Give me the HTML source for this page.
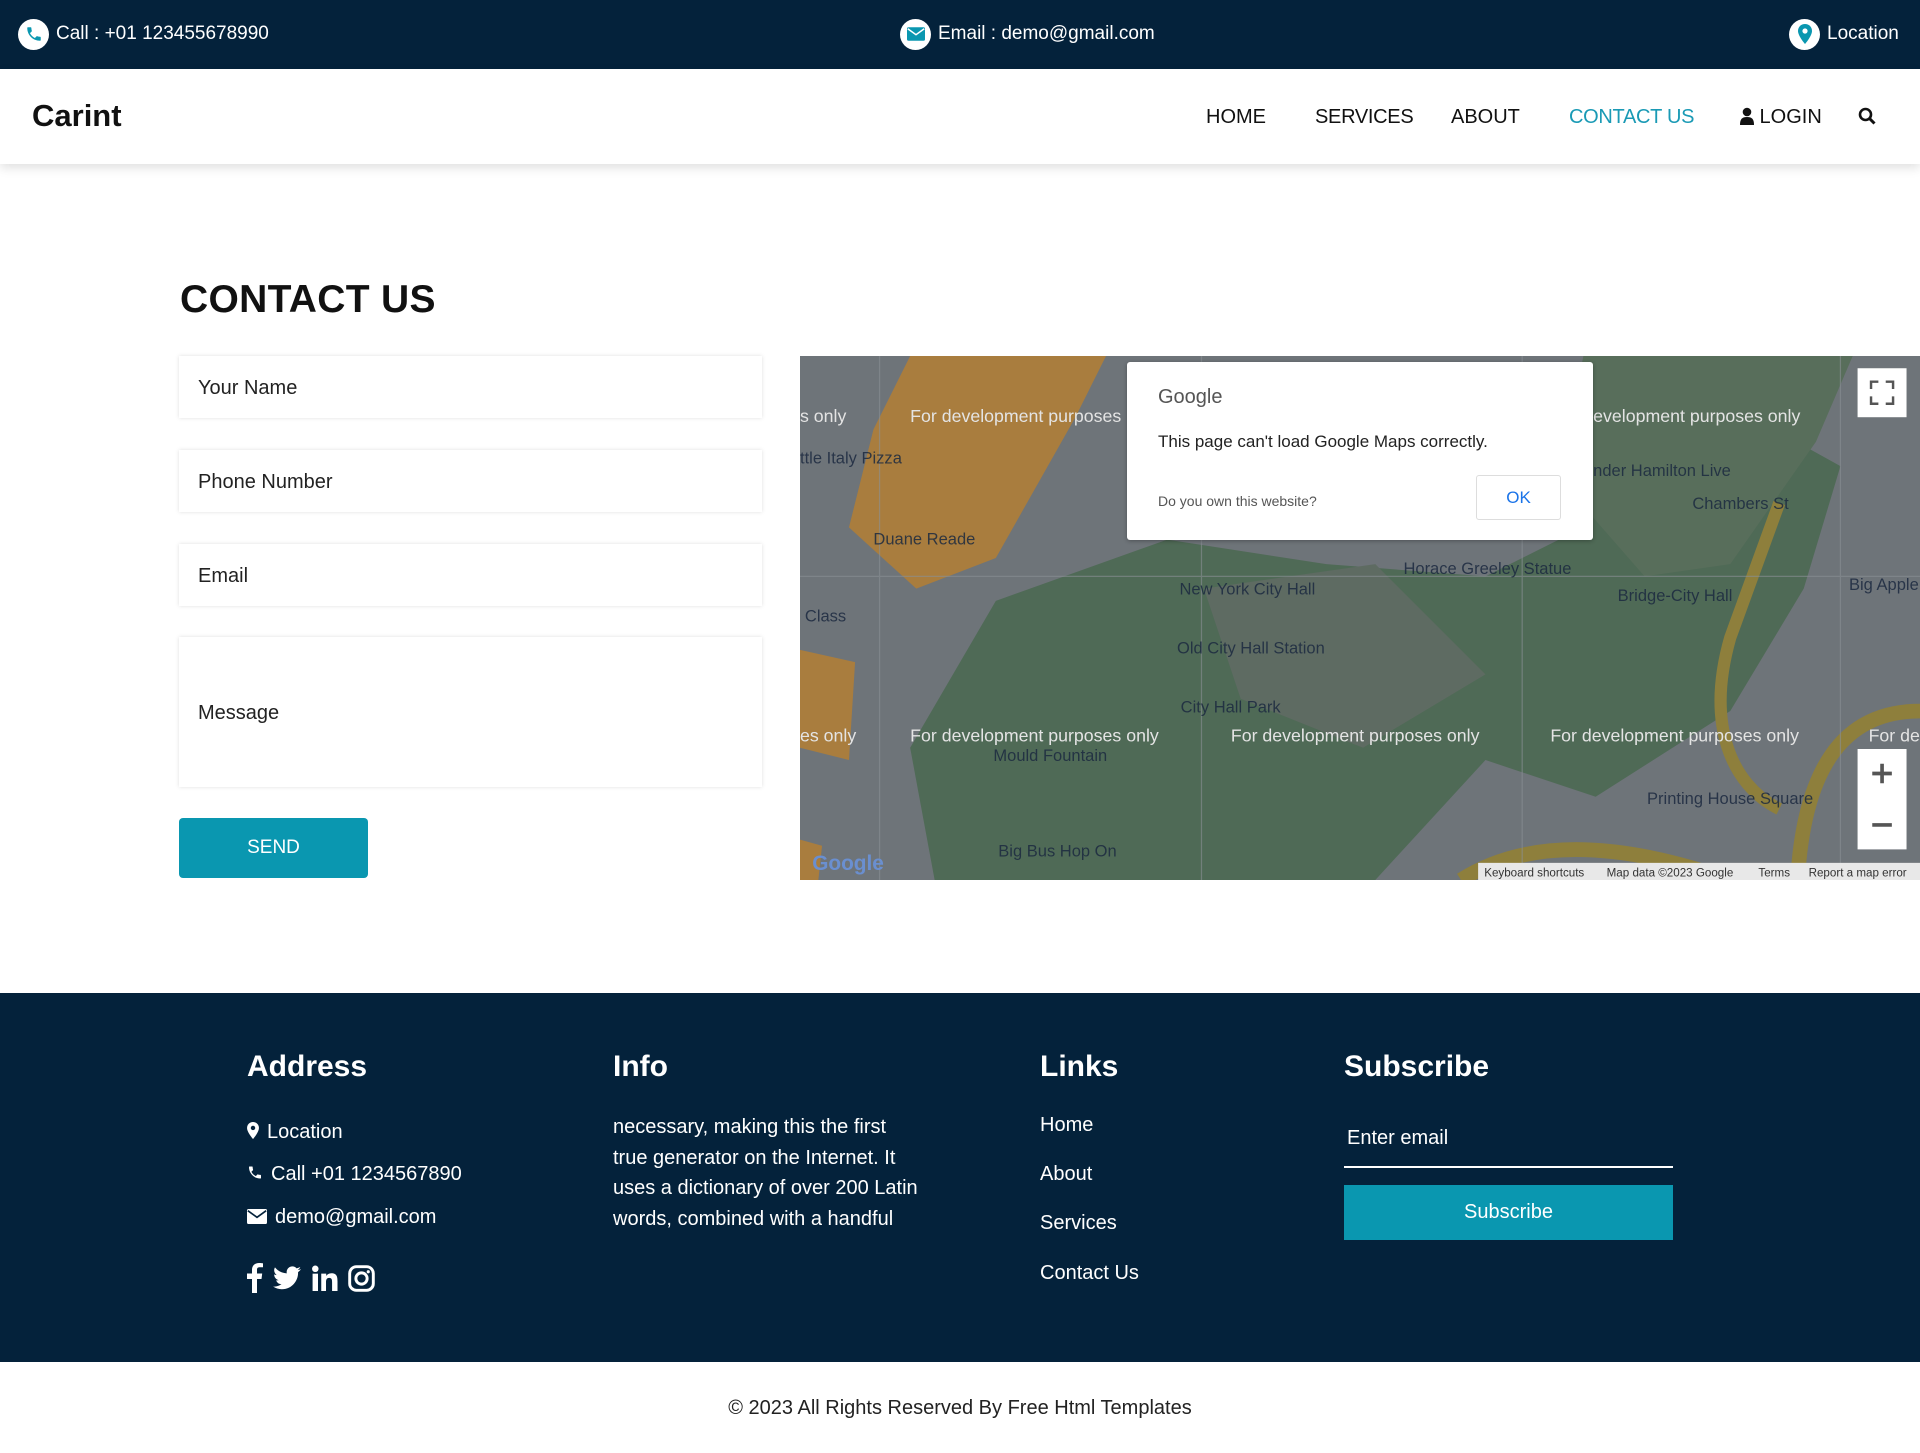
<!DOCTYPE html>
<html><head><meta charset="utf-8">
<style>
*{margin:0;padding:0;box-sizing:border-box}
body{width:1920px;height:1453px;font-family:"Liberation Sans",sans-serif;background:#fff;position:relative;overflow:hidden;color:#111}
.abs{position:absolute}
.top{left:0;top:0;width:1920px;height:69px;background:#04223b;color:#fff;font-size:19px}
.top .it{position:absolute;top:18px;display:flex;align-items:center;gap:7px;height:32px}
.ic{width:31px;height:31px;border-radius:50%;background:#fff;display:flex;align-items:center;justify-content:center}
.nav{left:0;top:69px;width:1920px;height:95px;background:#fff;box-shadow:0 4px 10px rgba(0,0,0,.12)}
.logo{left:32px;top:98px;font-size:31px;font-weight:bold;color:#111}
.nv{top:106px;font-size:20px;color:#111}
h1{position:absolute;left:180px;top:278px;font-size:39px;font-weight:bold;color:#111;letter-spacing:.3px}
.inp{position:absolute;left:179px;width:583px;background:#fff;box-shadow:0 0 4px rgba(0,0,0,.13);font-size:20px;color:#222;padding-left:19px;padding-top:2px;display:flex;align-items:center}
.btn{left:179px;top:818px;width:189px;height:60px;background:#0a97b0;border-radius:4px;color:#fff;font-size:19px;display:flex;align-items:center;justify-content:center}
.foot{left:0;top:993px;width:1920px;height:369px;background:#04223b;color:#fff}
.fh{position:absolute;top:1050px;font-size:30px;font-weight:bold;color:#fff}
.ft{position:absolute;font-size:20px;color:#fff}
.copy{left:0;top:1397px;width:1920px;text-align:center;font-size:20px;color:#222}
</style></head><body>
<div class="abs top">
 <div class="it" style="left:18px"><div class="ic"><svg width="18" height="18" viewBox="0 0 24 24"><path d="M6.6 10.8c1.4 2.8 3.8 5.1 6.6 6.6l2.2-2.2c.3-.3.7-.4 1-.2 1.1.4 2.300.6 3.6.6.6 0 1 .4 1 1V20c0 .6-.4 1-1 1C10.6 21 3 13.4 3 4c0-.6.4-1 1-1h3.5c.6 0 1 .4 1 1 0 1.3.2 2.5.6 3.6.1.3 0 .7-.2 1z" fill="#0a97b0"/></svg></div>Call : +01 123455678990</div>
 <div class="it" style="left:900px"><div class="ic"><svg width="18" height="14" viewBox="0 0 24 18"><rect x="0" y="0" width="24" height="18" rx="2" fill="#0a97b0"/><path d="M1 2l11 8 11-8" stroke="#fff" stroke-width="2" fill="none"/></svg></div>Email : demo@gmail.com</div>
 <div class="it" style="left:1789px"><div class="ic"><svg width="14" height="20" viewBox="0 0 14 20"><path d="M7 0C3 0 0 3 0 7c0 5 7 13 7 13s7-8 7-13c0-4-3-7-7-7z" fill="#0a97b0"/><circle cx="7" cy="7" r="2.6" fill="#fff"/></svg></div>Location</div>
</div>
<div class="abs nav"></div>
<div class="abs logo">Carint</div>
<div class="abs nv" style="left:1206px">HOME</div>
<div class="abs nv" style="left:1315px;letter-spacing:-.3px">SERVICES</div>
<div class="abs nv" style="left:1451px">ABOUT</div>
<div class="abs nv" style="left:1569px;color:#1a9ab5;letter-spacing:-.3px">CONTACT US</div>
<div class="abs nv" style="left:1740px"><svg width="14" height="18" viewBox="0 0 14 18" style="vertical-align:-2px"><circle cx="7" cy="5" r="4.3" fill="#111"/><path d="M0 18c0-6 2-8 7-8s7 2 7 8z" fill="#111"/></svg> LOGIN</div>
<div class="abs" style="left:1858px;top:107px"><svg width="18" height="18" viewBox="0 0 18 18"><circle cx="7.5" cy="7.5" r="5.5" stroke="#111" stroke-width="2.6" fill="none"/><path d="M11.5 11.5L16.5 16.5" stroke="#111" stroke-width="3"/></svg></div>

<h1>CONTACT US</h1>
<div class="inp" style="top:356px;height:62px">Your Name</div>
<div class="inp" style="top:450px;height:62px">Phone Number</div>
<div class="inp" style="top:544px;height:62px">Email</div>
<div class="inp" style="top:637px;height:150px">Message</div>
<div class="abs btn">SEND</div>

<div class="abs" style="left:800px;top:356px;width:1120px;height:524px;overflow:hidden">
<svg width="1120" height="524" viewBox="0 0 915 428" preserveAspectRatio="none" font-family="Liberation Sans, sans-serif">
<rect width="915" height="428" fill="#6e7479"/>
<polygon points="90,0 250,0 225,50 160,165 95,190 40,140 60,60" fill="#a97d3e"/>
<polygon points="0,240 45,250 40,330 0,320" fill="#a97d3e"/>
<polygon points="0,395 18,400 15,428 0,428" fill="#a97d3e"/>
<polygon points="160,200 300,150 430,170 560,180 640,140 700,60 760,40 850,90 820,190 760,290 650,360 560,330 470,428 110,428 90,320" fill="#4f6a56"/>
<polygon points="640,0 860,0 830,70 760,170 690,180 620,100" fill="#586e5b"/>
<polygon points="330,190 470,170 560,260 460,320 360,280" fill="#5e6b62"/>
<path d="M915,290 C850,290 820,340 815,428" stroke="#8e7f3c" stroke-width="12" fill="none"/>
<path d="M540,428 C600,390 680,400 760,428" stroke="#8e7f3c" stroke-width="12" fill="none"/>
<path d="M800,120 L760,230 C740,300 760,350 800,370" stroke="#8e7f3c" stroke-width="10" fill="none"/>
<path d="M0,180 L915,180 M65,0 L65,428 M328,0 L328,428 M590,0 L590,428 M850,0 L850,428" stroke="#8a9095" stroke-width="1" opacity=".6"/>
<g fill="#e4e4e4" font-size="14.5">
<text x="90" y="54">For development purposes only</text>
<text x="0" y="54">s only</text>
<text x="648" y="54">evelopment purposes only</text>
<text x="0" y="315">es only</text>
<text x="90" y="315">For development purposes only</text>
<text x="352" y="315">For development purposes only</text>
<text x="613" y="315">For development purposes only</text>
<text x="873" y="315">For de</text>
</g>
<g fill="#1c2a40" font-size="13.5" opacity=".85">
<text x="0" y="88">ttle Italy Pizza</text><text x="60" y="154">Duane Reade</text>
<text x="310" y="195">New York City Hall</text><text x="308" y="243">Old City Hall Station</text>
<text x="493" y="178">Horace Greeley Statue</text><text x="311" y="291">City Hall Park</text>
<text x="158" y="331">Mould Fountain</text><text x="162" y="409">Big Bus Hop On</text>
<text x="692" y="366">Printing House Square</text><text x="668" y="200">Bridge-City Hall</text>
<text x="729" y="125">Chambers St</text><text x="648" y="98">nder Hamilton Live</text>
<text x="857" y="191">Big Apple</text><text x="4" y="217">Class</text>
</g>
<text x="10" y="420" font-size="17" font-weight="bold" fill="#6a8fd0">Google</text>
<rect x="864" y="10" width="40" height="40" fill="#fff"/>
<path d="M875,27v-6h6M893,27v-6h-6M875,33v6h6M893,33v6h-6" stroke="#555" stroke-width="2" fill="none"/>
<rect x="864" y="321" width="40" height="82" fill="#fff"/>
<path d="M876,341h16M884,333v16M876,383h16" stroke="#555" stroke-width="3"/>
<rect x="554" y="414" width="361" height="14" fill="#e8e8e8"/>
<g font-size="9.5" fill="#333"><text x="559" y="425">Keyboard shortcuts</text><text x="659" y="425">Map data ©2023 Google</text><text x="783" y="425">Terms</text><text x="824" y="425">Report a map error</text></g>
</svg>
<div class="abs" style="left:327px;top:6px;width:466px;height:178px;background:#fff;border-radius:3px;box-shadow:0 1px 4px rgba(0,0,0,.3)">
 <div class="abs" style="left:31px;top:24px;font-size:20px;color:#555">Google</div>
 <div class="abs" style="left:31px;top:70px;font-size:17px;color:#222">This page can't load Google Maps correctly.</div>
 <div class="abs" style="left:31px;top:131px;font-size:14px;color:#555">Do you own this website?</div>
 <div class="abs" style="left:349px;top:113px;width:85px;height:45px;border:1px solid #ddd;border-radius:3px;color:#1a73e8;font-size:17px;display:flex;align-items:center;justify-content:center">OK</div>
</div>
</div>

<div class="abs foot"></div>
<div class="fh" style="left:247px">Address</div>
<div class="fh" style="left:613px">Info</div>
<div class="fh" style="left:1040px">Links</div>
<div class="fh" style="left:1344px">Subscribe</div>
<div class="ft" style="left:247px;top:1121px"><svg width="12" height="17" viewBox="0 0 14 20" style="vertical-align:-1px;margin-right:8px"><path d="M7 0C3 0 0 3 0 7c0 5 7 13 7 13s7-8 7-13c0-4-3-7-7-7z" fill="#fff"/><circle cx="7" cy="7" r="2.6" fill="#04223b"/></svg>Location</div>
<div class="ft" style="left:247px;top:1163px"><svg width="16" height="17" viewBox="0 0 24 24" style="vertical-align:-1px;margin-right:8px"><path d="M6.6 10.8c1.4 2.8 3.8 5.1 6.6 6.6l2.2-2.2c.3-.3.7-.4 1-.2 1.1.4 2.3.6 3.6.6.6 0 1 .4 1 1V20c0 .6-.4 1-1 1C10.6 21 3 13.4 3 4c0-.6.4-1 1-1h3.5c.6 0 1 .4 1 1 0 1.3.2 2.5.6 3.6.1.3 0 .7-.2 1z" fill="#fff"/></svg>Call +01 1234567890</div>
<div class="ft" style="left:247px;top:1206px"><svg width="20" height="15" viewBox="0 0 24 18" style="vertical-align:-1px;margin-right:8px"><rect width="24" height="18" rx="2" fill="#fff"/><path d="M1 2l11 8 11-8" stroke="#04223b" stroke-width="2" fill="none"/></svg>demo@gmail.com</div>
<div class="abs" style="left:247px;top:1263px;display:flex;gap:10px;align-items:center">
 <svg width="16" height="30" viewBox="0 0 16 30"><path d="M10 30V16h4.5l.7-5.5H10V7c0-1.6.5-2.7 2.7-2.7H16V.3C15.4.2 13.8 0 12 0 8 0 5 2.4 5 7v3.5H0V16h5v14z" fill="#fff"/></svg>
 <svg width="28" height="24" viewBox="0 0 24 20"><path d="M24 2.4c-.9.4-1.8.7-2.8.8 1-.6 1.8-1.6 2.2-2.7-1 .6-2 1-3.1 1.2C19.3.7 18 0 16.6 0c-2.700 0-4.9 2.2-4.9 4.9 0 .4 0 .8.1 1.1C7.7 5.8 4.1 3.9 1.7.9c-.4.7-.7 1.6-.7 2.5 0 1.7.9 3.2 2.2 4.1-.8 0-1.6-.2-2.2-.6v.1c0 2.4 1.7 4.4 3.9 4.8-.4.1-.8.2-1.3.2-.3 0-.6 0-.9-.1.6 2 2.4 3.4 4.6 3.4-1.7 1.3-3.8 2.1-6.1 2.1-.4 0-.8 0-1.2-.1C2.2 18.8 4.8 19.6 7.5 19.6c9.1 0 14-7.5 14-14v-.6c1-.7 1.8-1.6 2.5-2.6z" fill="#fff"/></svg>
 <svg width="27" height="26" viewBox="0 0 24 24"><rect x="1" y="8" width="5" height="16" fill="#fff"/><circle cx="3.5" cy="3.5" r="3" fill="#fff"/><path d="M9 8h4.6v2.2c.7-1.3 2.4-2.6 4.8-2.6 5 0 5.6 3.3 5.6 7.5V24h-5v-7.8c0-1.9 0-4.3-2.6-4.3s-3 2-3 4.1V24H9z" fill="#fff"/></svg>
 <svg width="27" height="27" viewBox="0 0 24 24"><rect x="1.5" y="1.5" width="21" height="21" rx="6" stroke="#fff" stroke-width="2.6" fill="none"/><circle cx="12" cy="12" r="5" stroke="#fff" stroke-width="2.6" fill="none"/><circle cx="18" cy="6" r="1.4" fill="#fff"/></svg>
</div>
<div class="ft" style="left:613px;top:1112px;line-height:30.6px;white-space:nowrap">necessary, making this the first<br>true generator on the Internet. It<br>uses a dictionary of over 200 Latin<br>words, combined with a handful</div>
<div class="ft" style="left:1040px;top:1114px">Home</div>
<div class="ft" style="left:1040px;top:1163px">About</div>
<div class="ft" style="left:1040px;top:1212px">Services</div>
<div class="ft" style="left:1040px;top:1262px">Contact Us</div>
<div class="ft" style="left:1347px;top:1127px">Enter email</div>
<div class="abs" style="left:1344px;top:1166px;width:329px;height:2px;background:#fff"></div>
<div class="abs" style="left:1344px;top:1185px;width:329px;height:55px;background:#0a97b0;color:#fff;font-size:20px;display:flex;align-items:center;justify-content:center">Subscribe</div>
<div class="abs copy">© 2023 All Rights Reserved By Free Html Templates</div>
</body></html>
